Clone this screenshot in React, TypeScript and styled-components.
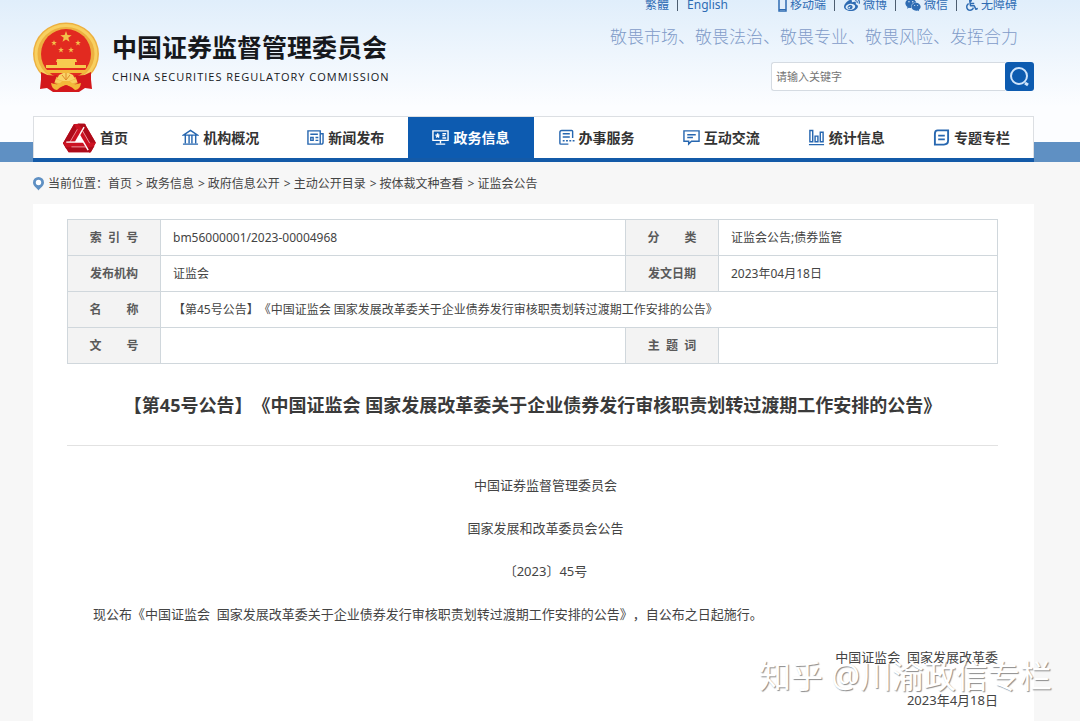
import React from 'react';
import styled, { createGlobalStyle, css } from 'styled-components';
import { FaWeibo, FaWeixin, FaWheelchair } from 'react-icons/fa';

const GlobalStyle = createGlobalStyle`
  * { box-sizing: border-box; }
  body {
    margin: 0;
    background: #f7f7f7;
    color: #444;
    font: 12px/20px "Noto Sans", "Noto Sans CJK SC", sans-serif;
    text-spacing-trim: space-all;
  }
  a { color: inherit; text-decoration: none; }
`;

const Page = styled.div`
  position: relative;
  display: flex;
  flex-direction: column;
  min-height: 100vh;
  overflow: hidden;
`;

const Masthead = styled.header`
  display: flex;
  justify-content: space-between;
  height: 116px;
  padding: 0 46px 0 33px;
  background: linear-gradient(#e0eefb, #fcfdff 92%);
`;

const Brand = styled.a`
  display: flex;
  gap: 13px;
  padding-top: 22px;
`;

const BrandText = styled.div`
  display: flex;
  flex-direction: column;
  padding-top: 7px;
  color: #16181c;
`;

const BrandName = styled.strong`
  font-size: 25px;
  line-height: 36px;
  white-space: nowrap;
`;

const BrandLatin = styled.span`
  font: 11px/24px "Open Sans", sans-serif;
  letter-spacing: 1px;
  white-space: nowrap;
`;

const Tools = styled.div`
  display: flex;
  flex-direction: column;
  align-items: flex-end;
`;

const QuickLinks = styled.nav`
  display: flex;
  align-items: center;
  height: 10px;
  padding-right: 17px;
  color: #2f6cb3;
  line-height: 20px;
`;

const QuickLink = styled.a`
  display: flex;
  align-items: center;
  gap: 3px;
  & + &::before {
    content: '';
    width: 1px;
    height: 12px;
    margin: 0 6px 0 8px;
    background: #4c5d70;
  }
`;

const QuickGroup = styled.div`
  display: flex;
  & + & { margin-left: 50px; }
`;

const Slogan = styled.p`
  margin: 15px 16px 0 0;
  color: #7f9bc8;
  font-size: 17px;
  font-weight: 300;
  line-height: 24px;
  white-space: nowrap;
`;

const SearchForm = styled.form`
  display: flex;
  width: 263px;
  height: 29px;
  margin-top: 13px;
`;

const SearchInput = styled.input`
  flex: 1;
  min-width: 0;
  padding: 0 4px;
  border: 1px solid #d5dbe2;
  border-right: 0;
  border-radius: 3px 0 0 3px;
  background: #fff;
  font: 11px/20px "Noto Sans", "Noto Sans CJK SC", sans-serif;
  &::placeholder { color: #757575; opacity: 1; }
`;

const SearchButton = styled.button`
  display: flex;
  align-items: center;
  justify-content: center;
  width: 29px;
  padding: 0;
  border: 0;
  border-radius: 3px;
  background: #0d5bb0;
`;

const NavStrip = styled.div`
  padding: 0 46px 0 33px;
  background: linear-gradient(#fcfdff 26px, #5f90c3 26px);
`;

const MainNav = styled.nav`
  display: flex;
  height: 46px;
  border-top: 1px solid #dcdfe3;
  border-bottom: 4px solid #135aa8;
  background: #fff;
  box-shadow: inset 1px 0 #dcdfe3, inset -1px 0 #dcdfe3;
`;

const NavItem = styled.a<{ $active?: boolean }>`
  flex: 1;
  display: flex;
  align-items: center;
  justify-content: center;
  gap: 4px;
  color: #333;
  font-size: 14px;
  font-weight: 700;
  white-space: nowrap;
  svg { color: #2767b0; }
  ${(p) =>
    p.$active &&
    css`
      background: #0d5bb0;
      color: #fff;
      svg { color: #fff; }
    `}
`;

const Breadcrumb = styled.nav`
  display: flex;
  align-items: center;
  height: 42px;
  padding: 1px 33px 0;
  white-space: nowrap;
  svg { margin-right: 4px; }
`;

const Crumb = styled.a`
  & + &::before {
    content: '>';
    margin: 0 3px 0 4px;
  }
`;

const Article = styled.main`
  flex: 1;
  margin: 0 46px 0 33px;
  padding: 15px 36px 0 34px;
  background: #fff;
`;

const MetaTable = styled.table`
  width: 100%;
  table-layout: fixed;
  border-collapse: collapse;
  th, td {
    height: 36px;
    padding: 0 12px;
    border: 1px solid #d0d7dc;
    white-space: nowrap;
  }
  th {
    width: 10%;
    padding: 0;
    background: #f3f3f3;
    color: #5a5a5a;
    font-weight: 700;
    white-space: pre;
  }
  td { text-align: left; }
`;

const WideCell = styled.td`
  width: 50%;
`;

const Title = styled.h1`
  margin: 0;
  padding: 28px 0 27px;
  border-bottom: 1px solid #e2e2e2;
  color: #3a3a3a;
  font-size: 18px;
  line-height: 26px;
  text-align: center;
  white-space: nowrap;
`;

const Body = styled.div`
  padding-top: 18px;
  font-size: 13px;
  line-height: 43px;
`;

const Paragraph = styled.p<{ $align?: 'center' | 'right' }>`
  margin: 0;
  text-align: ${(p) => p.$align ?? 'left'};
  text-indent: 2em;
  white-space: pre-wrap;
`;

const Watermark = styled.div`
  position: absolute;
  right: 28px;
  bottom: 22px;
  color: #fff;
  font-size: 32px;
  line-height: 48px;
  text-shadow: 1px 1px 1px #8c8c8c;
  white-space: nowrap;
  pointer-events: none;
`;

const Star = ({ x, y, r }: { x: number; y: number; r: number }) => {
  const points = Array.from({ length: 10 }, (_, i) => {
    const a = -Math.PI / 2 + (i * Math.PI) / 5;
    const d = i % 2 ? r * 0.4 : r;
    return `${x + d * Math.cos(a)},${y + d * Math.sin(a)}`;
  }).join(' ');
  return <polygon points={points} fill="#f3c04a" />;
};

const Emblem = () => (
  <svg width="66" height="71" viewBox="0 0 66 71" aria-hidden="true">
    <path d="M9 48 L7 67 L14 66 L20 70 H46 L52 66 L59 67 L57 48Z" fill="#d3181c" />
    <ellipse cx="33" cy="32" rx="33" ry="31.500" fill="#edb040" />
    <ellipse cx="33" cy="32" rx="30" ry="28.500" fill="none" stroke="#f8d060" strokeWidth="3" />
    <ellipse cx="33" cy="32" rx="25" ry="25" fill="#e22a20" />
    <Star x={33} y={15} r={6} />
    <Star x={21} y={21} r={3} />
    <Star x={45} y={21} r={3} />
    <Star x={28} y={28} r={3} />
    <Star x={38} y={28} r={3} />
    <path d="M24 37h19l1 3h-2v3h11v3H13v-3h11v-3h-1z" fill="#f7ca50" />
    <path d="M12 48h42l-3 3H15z" fill="#f3b93a" />
    <path d="M8 50q8 5 16 3l-3 9-13 3zM58 50q-8 5-16 3l3 9 13 3z" fill="#d3181c" />
    <path d="M24 57l2-4 4-2h6l4 2 2 4-6 2h-6z" fill="#f9d468" />
    <path d="M29 53l4 5 4-5M33 51v7" stroke="#e08a28" fill="none" />
    <path d="M18 61q8 3 11-2h8q3 5 11 2-1 7-6 7-3-3-6-4h-6q-3 1-6 4-5 0-6-7z" fill="#f3b93a" />
    <circle cx="33" cy="66" r="3" fill="#d3181c" />
  </svg>
);

const TriangleLogo = () => (
  <svg width="33" height="30" viewBox="-47 -46 94 82" aria-hidden="true">
    {[0, 120, 240].map((turn) => (
      <g key={turn} transform={`rotate(${turn})`}>
        <path d="M-16-44H18L-12 8-31 36-47 10z" fill="#cc1222" />
        <path d="M-16-44H1L-34 16l-3 12L-47 10z" fill="#ae0b1a" />
      </g>
    ))}
    <path d="M0-13 11 6H-11z" fill="#fff" />
    {[0, 120, 240].map((turn) => (
      <g key={turn} transform={`rotate(${turn})`} stroke="#fff" fill="none">
        <path d="M-11 6 13-36" strokeWidth="4" />
        <path d="M-6-30-27 6" strokeWidth="2" stroke="#f3b9bd" />
      </g>
    ))}
  </svg>
);

const glyphs: Record<string, React.ReactNode> = {
  org: <path d="M1.500 6.500 9 1.500l7.500 5zM3.500 7v8M7.500 7v8M10.500 7v8M14.500 7v8M1 16h16" />,
  news: <path d="M1 2h13v14H1zM14 5h3v9q0 2-2 2h-2M3.500 5.500h8M9 9h3M9 12h3M4 9h2.500v3H4z" />,
  gov: <path d="M1 2h16v10H1zM9 12v3M4 16h10M11 5h4M11 7h3M11 9.500h4M3.500 6.500h4.500M6 4.500v4M4.500 9l1.500-2 1.500 2" />,
  service: <path d="M15.500 9.500V2.500q0-1-1-1H4q-2 0-2 2V15q0 1 1 1h8M5 5h7.500M5 8.500h7.500M5 12.500h2M8.500 12.500h2M12 12.500h2M15.500 12.500h2" />,
  talk: <path d="M1 2h16v11H9l-3 3v-3H1zM4.500 6h9M4.500 9h6" />,
  stats: <path d="M2 1.500h3v12H2zM7.500 7.500h3v6h-3zM13 3.500h3v10h-3zM1 16.500h16" />,
  topic: <path d="M5 1.500h11V12q0 4.500-4.500 4.500H2V5q0-3.500 3-3.500zM5.500 7h7M5.500 11h7" strokeWidth="2" />,
};

const NavGlyph = ({ name }: { name: string }) => (
  <svg width="17" height="17" viewBox="0 0 18 18" fill="none" stroke="currentColor" strokeWidth="1.500" aria-hidden="true">
    {glyphs[name]}
  </svg>
);

const navItems = [
  { label: '首页', icon: 'logo' },
  { label: '机构概况', icon: 'org' },
  { label: '新闻发布', icon: 'news' },
  { label: '政务信息', icon: 'gov', active: true },
  { label: '办事服务', icon: 'service' },
  { label: '互动交流', icon: 'talk' },
  { label: '统计信息', icon: 'stats' },
  { label: '专题专栏', icon: 'topic' },
];

const crumbs = ['首页', '政务信息', '政府信息公开', '主动公开目录', '按体裁文种查看', '证监会公告'];

const docName = '【第45号公告】《中国证监会 国家发展改革委关于企业债券发行审核职责划转过渡期工作安排的公告》';

export default function App() {
  return (
    <Page>
      <GlobalStyle />
      <Masthead>
        <Brand href="#">
          <Emblem />
          <BrandText>
            <BrandName>中国证券监督管理委员会</BrandName>
            <BrandLatin>CHINA SECURITIES REGULATORY COMMISSION</BrandLatin>
          </BrandText>
        </Brand>
        <Tools>
          <QuickLinks aria-label="快捷链接">
            <QuickGroup>
              <QuickLink href="#">繁體</QuickLink>
              <QuickLink href="#">English</QuickLink>
            </QuickGroup>
            <QuickGroup>
              <QuickLink href="#">
                <svg width="9" height="14" viewBox="0 0 9 14" fill="none" stroke="currentColor" aria-hidden="true">
                  <path d="M1 1h7v12H1z" strokeWidth="1.500" />
                  <path d="M1 11.500h7" />
                </svg>
                移动端
              </QuickLink>
              <QuickLink href="#"><FaWeibo size={16} />微博</QuickLink>
              <QuickLink href="#"><FaWeixin size={16} />微信</QuickLink>
              <QuickLink href="#"><FaWheelchair size={12} />无障碍</QuickLink>
            </QuickGroup>
          </QuickLinks>
          <Slogan>敬畏市场、敬畏法治、敬畏专业、敬畏风险、发挥合力</Slogan>
          <SearchForm role="search" onSubmit={(e) => e.preventDefault()}>
            <SearchInput type="text" aria-label="请输入关键字" placeholder="请输入关键字" />
            <SearchButton type="submit" aria-label="搜索">
              <svg width="21" height="21" viewBox="0 0 21 21" fill="none" stroke="#cfe4fb" strokeWidth="2" aria-hidden="true">
                <circle cx="10" cy="10" r="8" />
                <path d="M16 17l3 2" strokeWidth="3" />
              </svg>
            </SearchButton>
          </SearchForm>
        </Tools>
      </Masthead>

      <NavStrip>
        <MainNav aria-label="主导航">
          {navItems.map((item) => (
            <NavItem key={item.label} href="#" $active={item.active}>
              {item.icon === 'logo' ? <TriangleLogo /> : <NavGlyph name={item.icon} />}
              {item.label}
            </NavItem>
          ))}
        </MainNav>
      </NavStrip>

      <Breadcrumb aria-label="当前位置">
        <svg width="11" height="14" viewBox="0 0 11 14" aria-hidden="true">
          <path d="M5.500 0a5.500 5.500 0 0 1 5.500 5.500C11 9 7 11 5.500 13.500 4 11 0 9 0 5.500A5.500 5.500 0 0 1 5.500 0z" fill="#5f90c3" />
          <circle cx="5.500" cy="5.500" r="2.700" fill="#fff" />
        </svg>
        <span>当前位置：</span>
        {crumbs.map((crumb) => (
          <Crumb key={crumb} href="#">{crumb}</Crumb>
        ))}
      </Breadcrumb>

      <Article>
        <MetaTable>
          <tbody>
            <tr>
              <th scope="row">{'索  引  号'}</th>
              <WideCell>bm56000001/2023-00004968</WideCell>
              <th scope="row">{'分        类'}</th>
              <td>证监会公告;债券监管</td>
            </tr>
            <tr>
              <th scope="row">发布机构</th>
              <td>证监会</td>
              <th scope="row">发文日期</th>
              <td>2023年04月18日</td>
            </tr>
            <tr>
              <th scope="row">{'名        称'}</th>
              <td colSpan={3}>{docName}</td>
            </tr>
            <tr>
              <th scope="row">{'文        号'}</th>
              <td />
              <th scope="row">{'主  题  词'}</th>
              <td />
            </tr>
          </tbody>
        </MetaTable>
        <Title>{docName}</Title>
        <Body>
          <Paragraph $align="center">中国证券监督管理委员会</Paragraph>
          <Paragraph $align="center">国家发展和改革委员会公告</Paragraph>
          <Paragraph $align="center">〔2023〕45号</Paragraph>
          <Paragraph>
            {'现公布《中国证监会  国家发展改革委关于企业债券发行审核职责划转过渡期工作安排的公告》，自公布之日起施行。'}
          </Paragraph>
          <Paragraph $align="right">{'中国证监会  国家发展改革委'}</Paragraph>
          <Paragraph $align="right">2023年4月18日</Paragraph>
        </Body>
      </Article>
      <Watermark>知乎 @川渝政信专栏</Watermark>
    </Page>
  );
}
